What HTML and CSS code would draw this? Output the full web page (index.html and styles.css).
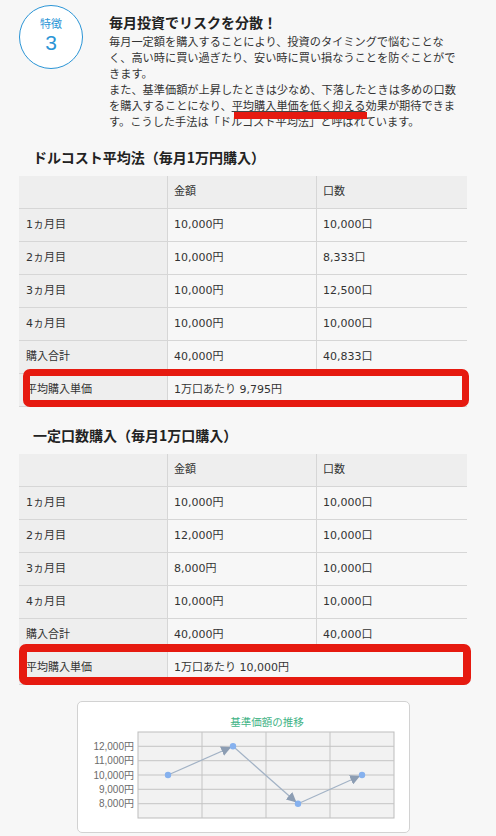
FILE: index.html
```html
<!DOCTYPE html>
<html lang="ja">
<head>
<meta charset="utf-8">
<title>特徴3 毎月投資でリスクを分散</title>
<link rel="stylesheet" href="styles.css">
</head>
<body>
<div class="page">

	<div class="feature">
		<div class="badge">
			<span class="badge-label">特徴</span>
			<span class="badge-num">3</span>
		</div>
		<div class="feature-body">
			<h2 class="feature-title">毎月投資でリスクを分散！</h2>
			<p class="feature-text">毎月一定額を購入することにより、投資のタイミングで悩むことな<br>く、高い時に買い過ぎたり、安い時に買い損なうことを防ぐことがで<br>きます。<br>また、基準価額が上昇したときは少なめ、下落したときは多めの口数<br>を購入することになり、<span class="mark">平均購入単価を低く抑える</span>効果が期待できま<br>す。こうした手法は「ドルコスト平均法」と呼ばれています。</p>
		</div>
	</div>

	<!-- ドルコスト平均法 -->
	<h3 class="plan-title">ドルコスト平均法（毎月1万円購入）</h3>
	<div class="table-wrap">
		<table class="plan-table">
			<tr class="head"><td></td><td>金額</td><td>口数</td></tr>
			<tr><td>1ヵ月目</td><td>10,000円</td><td>10,000口</td></tr>
			<tr><td>2ヵ月目</td><td>10,000円</td><td>8,333口</td></tr>
			<tr><td>3ヵ月目</td><td>10,000円</td><td>12,500口</td></tr>
			<tr><td>4ヵ月目</td><td>10,000円</td><td>10,000口</td></tr>
			<tr><td>購入合計</td><td>40,000円</td><td>40,833口</td></tr>
			<tr><td>平均購入単価</td><td colspan="2">1万口あたり 9,795円</td></tr>
		</table>
		<div class="highlight hl-first"></div>
	</div>

	<!-- 一定口数購入 -->
	<h3 class="plan-title second">一定口数購入（毎月1万口購入）</h3>
	<div class="table-wrap">
		<table class="plan-table">
			<tr class="head"><td></td><td>金額</td><td>口数</td></tr>
			<tr><td>1ヵ月目</td><td>10,000円</td><td>10,000口</td></tr>
			<tr><td>2ヵ月目</td><td>12,000円</td><td>10,000口</td></tr>
			<tr><td>3ヵ月目</td><td>8,000円</td><td>10,000口</td></tr>
			<tr><td>4ヵ月目</td><td>10,000円</td><td>10,000口</td></tr>
			<tr><td>購入合計</td><td>40,000円</td><td>40,000口</td></tr>
			<tr><td>平均購入単価</td><td colspan="2">1万口あたり 10,000円</td></tr>
		</table>
		<div class="highlight hl-second"></div>
	</div>

	<div class="chart-card">
		<svg class="chart" width="331" height="130" viewBox="0 0 331 130">
			<defs>
				<marker id="arrow" viewBox="0 0 10 10" refX="12" refY="5" markerWidth="10" markerHeight="10" markerUnits="userSpaceOnUse" orient="auto">
					<path d="M0,0 L10,5 L0,10 z" fill="#8c9db3"/>
				</marker>
			</defs>
			<text class="chart-title" x="189" y="24" text-anchor="middle">基準価額の推移</text>
			<rect x="60" y="30" width="256" height="86" fill="#f2f2f2" stroke="#bdbdbd"/>
			<g stroke="#c4c4c4">
				<line x1="124" y1="30" x2="124" y2="116"/>
				<line x1="188" y1="30" x2="188" y2="116"/>
				<line x1="252" y1="30" x2="252" y2="116"/>
				<line x1="60" y1="44.3" x2="316" y2="44.3"/>
				<line x1="60" y1="58.7" x2="316" y2="58.7"/>
				<line x1="60" y1="73" x2="316" y2="73"/>
				<line x1="60" y1="87.3" x2="316" y2="87.3"/>
				<line x1="60" y1="101.7" x2="316" y2="101.7"/>
			</g>
			<g class="axis" text-anchor="end">
				<text x="56" y="47.8">12,000円</text>
				<text x="56" y="62.2">11,000円</text>
				<text x="56" y="76.5">10,000円</text>
				<text x="56" y="90.8">9,000円</text>
				<text x="56" y="105.2">8,000円</text>
			</g>
			<g stroke="#a2b2c5" stroke-width="1.2" marker-end="url(#arrow)">
				<line x1="90" y1="73" x2="155" y2="44.3"/>
				<line x1="155" y1="44.3" x2="220" y2="101.7"/>
				<line x1="220" y1="101.7" x2="284" y2="73"/>
			</g>
			<g fill="#86b1ee">
				<circle cx="90" cy="73" r="3.2"/>
				<circle cx="155" cy="44.3" r="3.2"/>
				<circle cx="220" cy="101.7" r="3.2"/>
				<circle cx="284" cy="73" r="3.2"/>
			</g>
		</svg>
	</div>

</div>
</body>
</html>
```

FILE: styles.css
```css
body {
    margin: 0;
    background-color: #f7f7f7;
    font-family: "DejaVu Sans", "Noto Sans CJK JP", sans-serif;
    color: #333;
}
.page {
    padding: 0 29px 0 19px;
}

/* feature block */
.feature {
    display: flex;
    padding-top: 5px;
}
.badge {
    flex: none;
    width: 64px;
    height: 64px;
    box-sizing: border-box;
    border: 1px solid #2b95d6;
    border-radius: 50%;
    background-color: #fff;
    color: #2b95d6;
    display: flex;
    flex-direction: column;
    align-items: center;
    font-family: "Noto Sans CJK JP", sans-serif;
}
.badge-label {
    margin-top: 10px;
    font-size: 11px;
    line-height: 14px;
}
.badge-num {
    margin-top: 3px;
    font-family: "Liberation Sans", sans-serif;
    font-size: 21px;
    line-height: 20px;
}
.feature-body {
    margin-left: 26px;
}
.feature-title {
    margin: 7px 0 1px;
    font-family: "Noto Sans CJK JP", sans-serif;
    font-size: 14px;
    line-height: 20px;
    font-weight: bold;
    color: #222;
}
.feature-text {
    margin: 0;
    font-family: "Noto Sans CJK JP", sans-serif;
    font-size: 11.2px;
    line-height: 16px;
}
.mark {
    position: relative;
    text-decoration: underline;
    text-decoration-color: #444;
}
.mark::after {
    content: "";
    position: absolute;
    left: 2px;
    right: -1px;
    top: 15px;
    height: 7px;
    background-color: #e61a10;
}

/* tables */
.plan-title {
    margin: 18px 0 9px 14px;
    font-family: "Noto Sans CJK JP", sans-serif;
    font-size: 14px;
    line-height: 20px;
    font-weight: bold;
    color: #222;
}
.plan-title.second {
    margin-top: 18px;
}
.table-wrap {
    position: relative;
}
.plan-table {
    width: 448px;
    table-layout: fixed;
    border-collapse: separate;
    border-spacing: 0;
    font-size: 11px;
}
.plan-table td {
    height: 32px;
    padding: 0 6px;
    line-height: 32px;
    border-bottom: 1px solid #d6d6d6;
    white-space: nowrap;
}
.plan-table td:first-child {
    width: 135px;
    background-color: #eeeeee;
    border-right: 1px solid #d6d6d6;
    padding-left: 7px;
}
.plan-table tr td:nth-child(2) {
    width: 136px;
    border-right: 1px solid #d6d6d6;
}
.plan-table tr:last-child td:nth-child(2) {
    border-right: none;
}
.plan-table .head td {
    background-color: #eeeeee;
}

/* red annotation boxes */
.highlight {
    position: absolute;
    box-sizing: border-box;
    border: 7px solid #e61a10;
    border-radius: 7px;
}
.hl-first {
    top: 193px;
    left: 4px;
    right: -2px;
    height: 38px;
}
.hl-second {
    top: 190px;
    left: 0;
    right: -4px;
    height: 41px;
    border-width: 8px;
}

/* chart */
.chart-card {
    width: 333px;
    height: 132px;
    box-sizing: border-box;
    margin: 16px auto 0;
    background-color: #fff;
    border: 1px solid #d2d2d2;
    border-radius: 5px;
}
.chart {
    display: block;
}
.chart-title {
    font-family: "Noto Sans CJK JP", sans-serif;
    font-size: 10.5px;
    fill: #3fb386;
}
.axis text {
    font-family: "Liberation Sans", "Noto Sans CJK JP", sans-serif;
    font-size: 10px;
    fill: #6b6b6b;
}
```
